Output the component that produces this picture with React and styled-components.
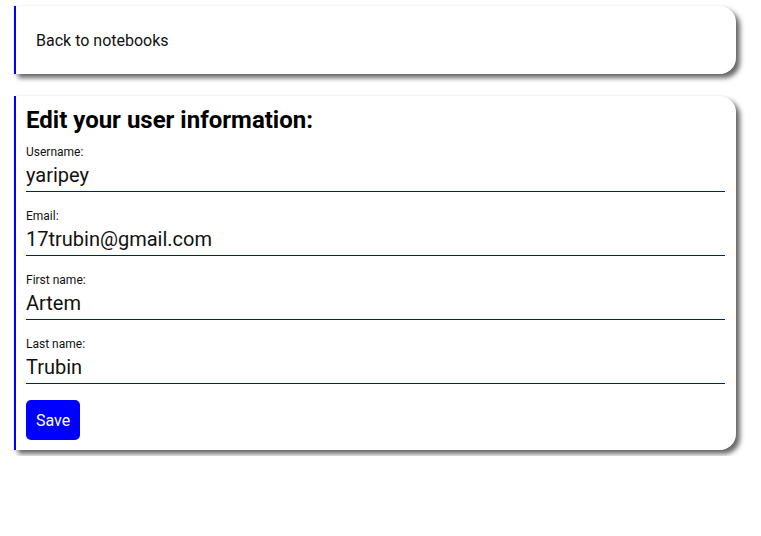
import React from "react";
import styled, { createGlobalStyle } from "styled-components";

const GlobalStyle = createGlobalStyle`
body {
  margin: 0;
  background: #fff;
  font-family: Roboto, "Liberation Sans", sans-serif;
  color: #111;
}
`;

const fields = [
  { label: "Username:", value: "yaripey" },
  { label: "Email:", value: "17trubin@gmail.com" },
  { label: "First name:", value: "Artem" },
  { label: "Last name:", value: "Trubin" },
];

function App() {
  const [form, setForm] = React.useState(fields);

  const change = (i, v) =>
    setForm(form.map((f, j) => (j === i ? { ...f, value: v } : f)));

  return (
    <Page>
      <GlobalStyle />
      <Card pad="25px 20px 23px">
        <BackLink href="#">Back to notebooks</BackLink>
      </Card>
      <Card pad="10px 11px 10px 10px">
        <Heading>Edit your user information:</Heading>
        {form.map((f, i) => (
          <Field key={f.label}>
            <Label>{f.label}</Label>
            <Underline>
              <Input value={f.value} onChange={(e) => change(i, e.target.value)} />
            </Underline>
          </Field>
        ))}
        <SaveButton>Save</SaveButton>
      </Card>
    </Page>
  );
}

const Page = styled.div`
  display: flex;
  flex-direction: column;
  gap: 22px;
  padding: 6px 14px;
  width: 722px;
`;

const Card = styled.div`
  display: flex;
  flex-direction: column;
  padding: ${(p) => p.pad};
  background: #fff;
  border-left: 2px solid #0000ff;
  border-radius: 0 16px 16px 0;
  box-shadow: 4px 4px 5px rgba(0, 0, 0, 0.6), 0 0 3px rgba(0, 0, 0, 0.06);
`;

const BackLink = styled.a`
  font-size: 16px;
  line-height: 20px;
  color: #111;
  text-decoration: none;
`;

const Heading = styled.h2`
  margin: 0 0 11px;
  font-size: 24px;
  line-height: 28px;
  font-weight: 700;
  color: #000;
`;

const Field = styled.label`
  display: flex;
  flex-direction: column;
  margin-bottom: 17px;
`;

const Label = styled.span`
  font-size: 12px;
  line-height: 14px;
  color: #111;
`;

const Underline = styled.div`
  display: flex;
  border-bottom: 1px solid #0000ff;
`;

const Input = styled.input`
  flex: 1;
  min-width: 0;
  font-family: Roboto, "Liberation Sans", sans-serif;
  font-size: 20px;
  line-height: 24px;
  padding: 4px 0;
  border: none;
  outline: none;
  color: #111;
  background: transparent;
`;

const SaveButton = styled.button`
  align-self: flex-start;
  height: 40px;
  padding: 0 10px;
  margin-top: -1px;
  border: none;
  border-radius: 5px;
  background: #0000ff;
  color: #fff;
  font-family: Roboto, "Liberation Sans", sans-serif;
  font-size: 16px;
  cursor: pointer;
`;

export default App;
